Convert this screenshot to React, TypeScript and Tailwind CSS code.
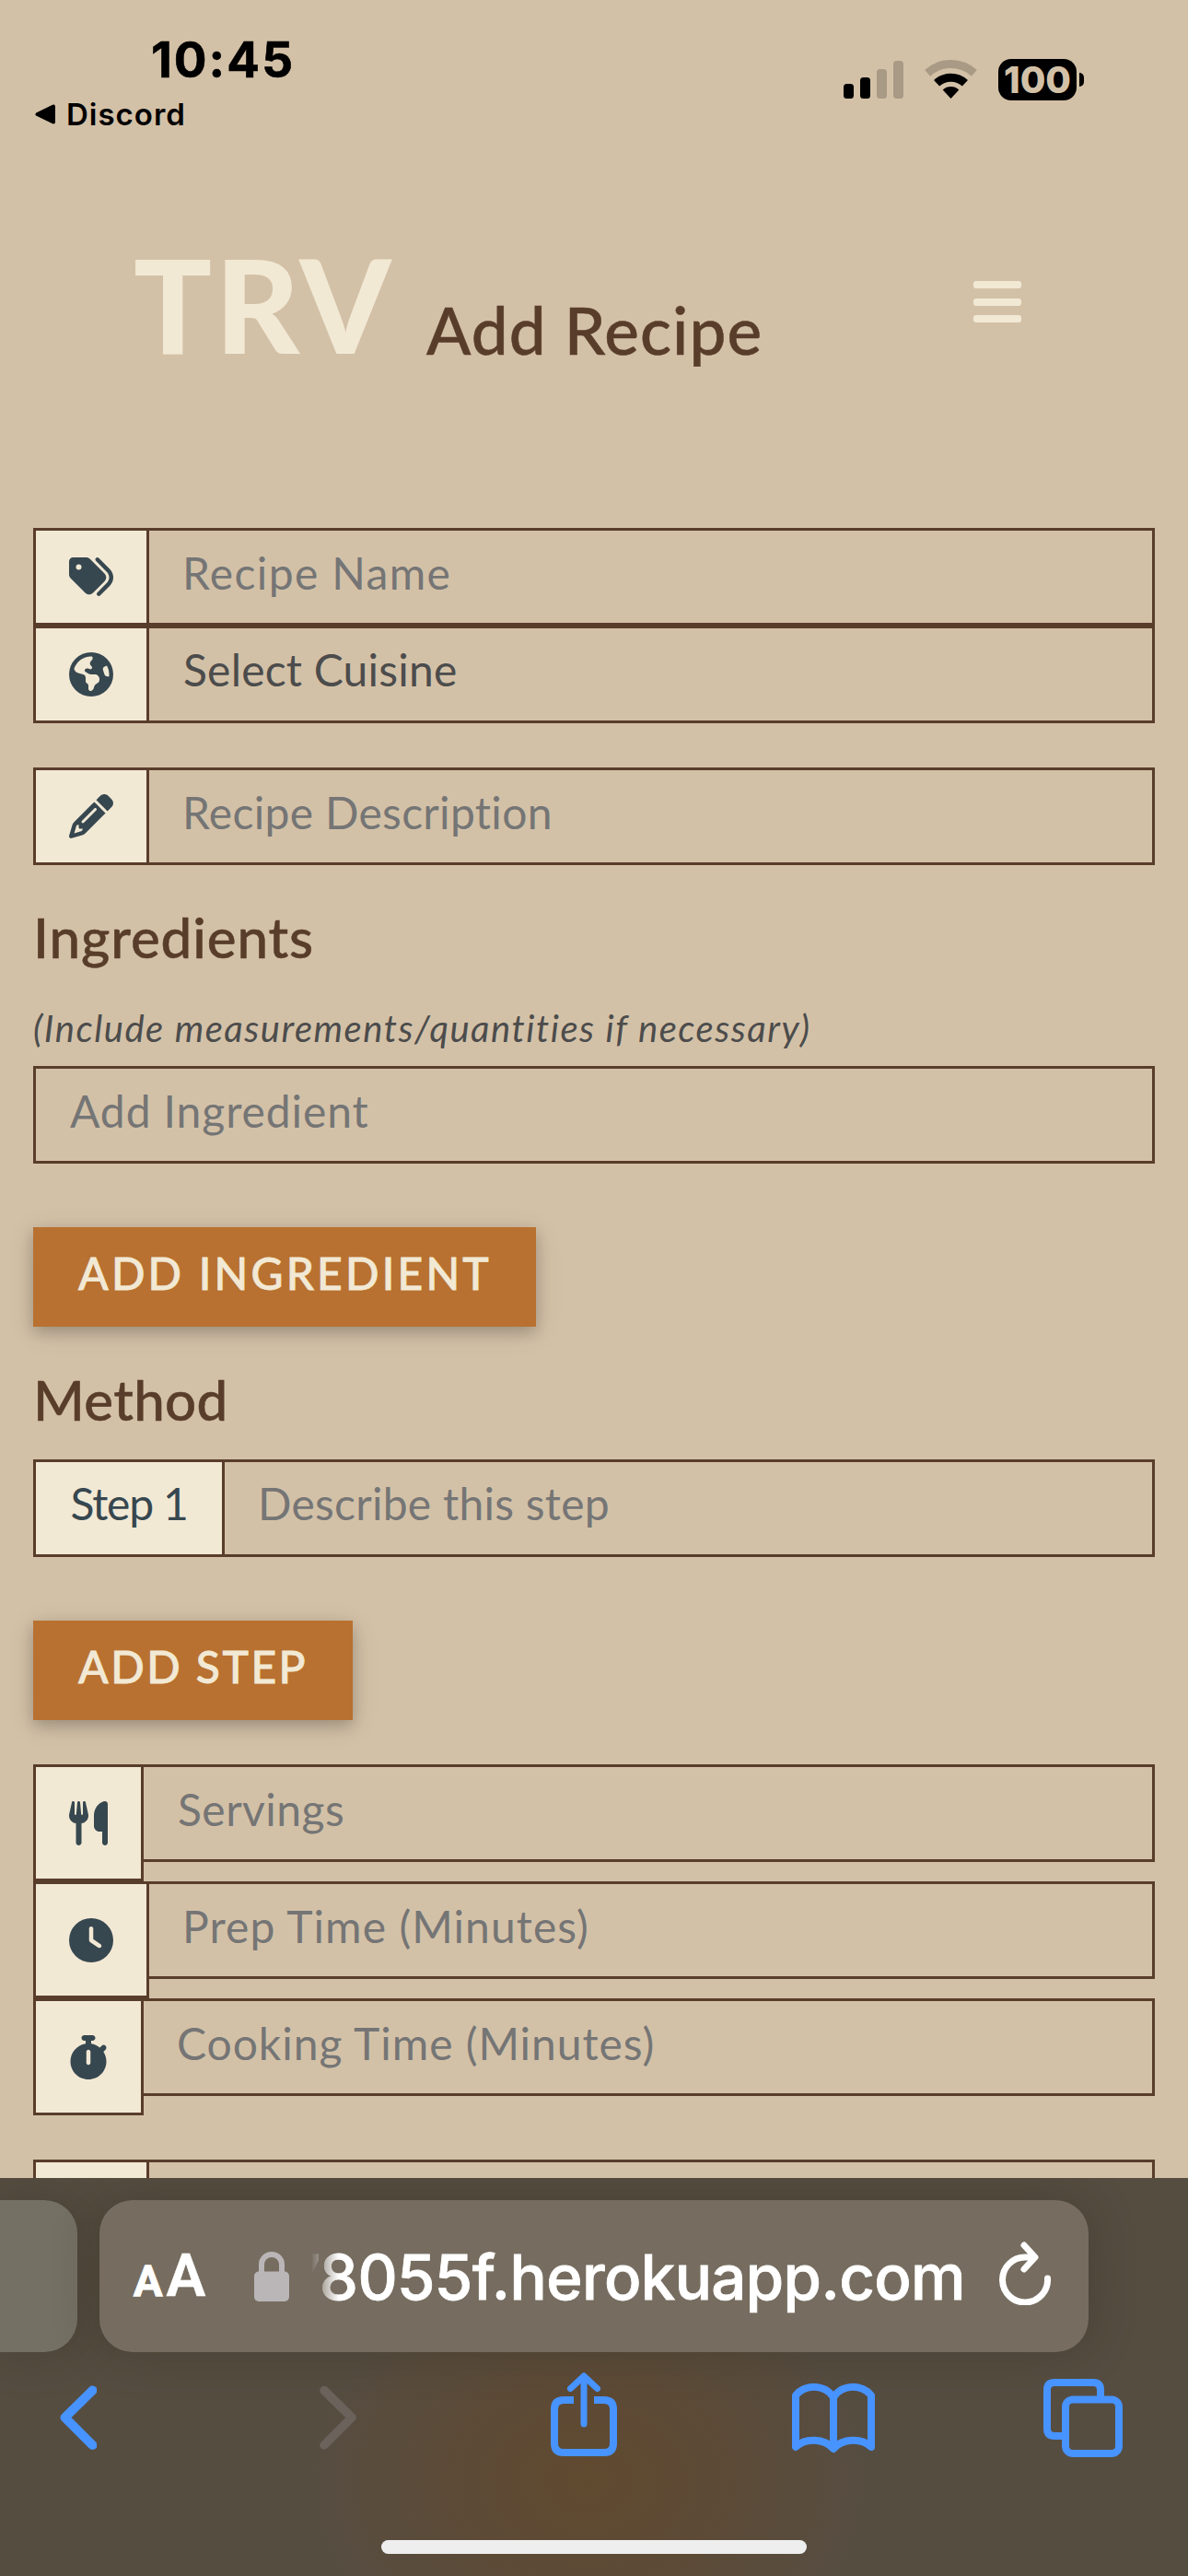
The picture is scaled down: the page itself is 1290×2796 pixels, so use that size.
import type { ReactNode } from 'react';
import { FaTags, FaEarthAmericas, FaPencil, FaUtensils, FaClock, FaStopwatch } from 'react-icons/fa6';

function StatusBar() {
  return (
    <div className="flex h-[260px] shrink-0 items-start justify-between font-['Inter',sans-serif] text-black">
      <div className="flex flex-col gap-[6px] pt-[33px]">
        <div className="pl-[164px] text-[53px] leading-[64px] font-bold tracking-[2px] [-webkit-text-stroke:0.6px]">10:45</div>
        <div className="flex items-center gap-[12px] pl-[38px] text-[33px] leading-[42px] font-semibold tracking-[1px]">
          <svg width="22" height="22" viewBox="0 0 22 22" stroke="currentColor" strokeWidth="4" strokeLinejoin="round" fill="currentColor">
            <path d="M2.5 11 L20 2.5 V19.5Z" />
          </svg>
          Discord
        </div>
      </div>
      <div className="flex gap-[23px] pt-[64px] pr-[113px]">
        <svg width="65" height="45" viewBox="0 0 65 45">
          <rect x="0" y="27" width="11" height="16" rx="3.5" />
          <rect x="18" y="20" width="11" height="23" rx="3.5" />
          <rect x="36" y="11" width="11" height="32" rx="3.5" opacity="0.2" />
          <rect x="54" y="2" width="11" height="41" rx="3.5" opacity="0.2" />
        </svg>
        <svg width="57" height="45" viewBox="0 -1 57 45" fill="none" stroke="#000" strokeWidth="9">
          <path d="M3.2 14.35 A37.5 37.5 0 0 1 53.8 14.35" opacity="0.2" />
          <path d="M13.1 25.2 A22.75 22.75 0 0 1 43.9 25.2" />
          <path d="M28.5 42 L19.7 32.4 A13 13 0 0 1 37.3 32.4Z" fill="#000" stroke="none" />
        </svg>
        <div className="flex items-center gap-[3px]">
          <div className="flex h-[45px] w-[85px] items-center justify-center rounded-[14px] bg-black text-[40px] leading-[45px] font-extrabold text-[#d3c1a7]">
            100
          </div>
          <div className="h-[15px] w-[5px] rounded-r-full bg-black" />
        </div>
      </div>
    </div>
  );
}

function SiteHeader() {
  return (
    <header className="flex h-[313px] shrink-0 items-start pl-[145px] font-['Lato',sans-serif]">
      <div className="mt-[2px] w-[318px] text-[141px] leading-[136px] font-black tracking-[3.6px] text-[#f2e9d5]">TRV</div>
      <h1 className="mt-[53px] w-[594px] text-[71px] leading-[90px] font-medium tracking-[1.1px] text-[#593d2b] [-webkit-text-stroke:0.5px]">Add Recipe</h1>
      <div className="mt-[45px] flex w-[52px] flex-col gap-[10.5px]">
        <span className="h-[8px] rounded-[3px] bg-[#f2e9d5]" />
        <span className="h-[8px] rounded-[3px] bg-[#f2e9d5]" />
        <span className="h-[8px] rounded-[3px] bg-[#f2e9d5]" />
      </div>
    </header>
  );
}

function Field({ addon, wide = '', tall = false, children }: { addon: ReactNode; wide?: string; tall?: boolean; children: ReactNode }) {
  return (
    <div className={tall ? 'flex h-[127px] items-start' : 'flex h-[106px] items-stretch'}>
      <div className={`flex shrink-0 items-center justify-center border-[3px] border-[#593d2b] bg-[#f2e9d5] text-[48px] text-[#37474f] ${tall ? 'h-[127px]' : ''} ${wide || 'w-[126px]'}`}>
        {addon}
      </div>
      <div className="flex h-[106px] flex-1 items-center border-y-[3px] border-r-[3px] border-[#593d2b] pb-[9px] pl-9">{children}</div>
    </div>
  );
}

function Placeholder({ className, children }: { className: string; children: ReactNode }) {
  return <span className={`text-[48px] leading-[58px] whitespace-nowrap text-[#757575] ${className}`}>{children}</span>;
}

function ActionButton({ className, children }: { className: string; children: ReactNode }) {
  return (
    <button
      className={`flex h-[108px] items-center bg-[#b87130] pb-[9px] pl-[49px] text-[48px] leading-[58px] font-medium whitespace-nowrap text-[#f2e9d5] shadow-[0_6px_15px_rgba(0,0,0,0.2),0_6px_30px_rgba(0,0,0,0.1)] [-webkit-text-stroke:0.8px] ${className}`}
    >
      {children}
    </button>
  );
}

function RecipeForm() {
  return (
    <main className="flex min-h-0 flex-1 flex-col overflow-hidden px-9 font-['Lato',sans-serif]">
      <Field addon={<FaTags />}><Placeholder className="tracking-[1.34px]">Recipe Name</Placeholder></Field>
      <Field addon={<FaEarthAmericas />}>
        <span className="pb-[2px] pl-px text-[48px] leading-[58px] tracking-[0.2px] text-[#4c4c4c]">Select Cuisine</span>
      </Field>
      <div className="mt-12 h-[105px] shrink-0">
        <Field addon={<FaPencil />}><Placeholder className="tracking-[0.3px]">Recipe Description</Placeholder></Field>
      </div>
      <h2 className="mt-[43px] text-[60px] leading-[72px] font-medium tracking-[0.9px] text-[#593d2b] [-webkit-text-stroke:0.5px]">Ingredients</h2>
      <p className="mt-[39px] text-[40px] leading-[48px] tracking-[1.52px] whitespace-nowrap text-[#4c4c4c] italic">
        (Include measurements/quantities if necessary)
      </p>
      <div className="mt-[17px] flex h-[106px] shrink-0 items-center border-[3px] border-[#593d2b] pb-[9px] pl-[37px]">
        <Placeholder className="tracking-[0.9px]">Add Ingredient</Placeholder>
      </div>
      <ActionButton className="mt-[69px] w-[546px] shrink-0 tracking-[3.2px]">ADD INGREDIENT</ActionButton>
      <h2 className="mt-[43px] text-[60px] leading-[72px] font-medium tracking-[0.3px] text-[#593d2b] [-webkit-text-stroke:0.5px]">Method</h2>
      <div className="mt-[29px] shrink-0">
        <Field
          wide="w-[208px]"
          addon={<span className="pb-[11px] leading-[58px] tracking-[-1.2px] whitespace-nowrap">Step 1</span>}
        >
          <Placeholder className="pb-[2px] tracking-[0.25px]">Describe this step</Placeholder>
        </Field>
      </div>
      <ActionButton className="mt-[69px] w-[347px] shrink-0 tracking-[2.5px]">ADD STEP</ActionButton>
      <div className="mt-12 shrink-0">
        <Field tall wide="w-[120px]" addon={<FaUtensils />}><Placeholder className="pl-px tracking-[0.47px]">Servings</Placeholder></Field>
        <Field tall addon={<FaClock />}><Placeholder className="tracking-[1.06px]">Prep Time (Minutes)</Placeholder></Field>
        <Field tall wide="w-[120px]" addon={<FaStopwatch />}><Placeholder className="tracking-[0.95px]">Cooking Time (Minutes)</Placeholder></Field>
      </div>
      <div className="mt-12 shrink-0">
        <Field addon={null}>{null}</Field>
      </div>
    </main>
  );
}

function BrowserBar() {
  return (
    <footer className="flex h-[432px] shrink-0 flex-col overflow-hidden bg-[#564d41] bg-[radial-gradient(ellipse_300px_230px_at_640px_330px,#604a2f_0%,#5d4a36_45%,transparent_100%)] pt-[24px] font-['Inter',sans-serif]">
      <div className="flex h-[165px] shrink-0 gap-[24px]">
        <div className="w-[84px] rounded-r-[36px] bg-[#747064] shadow-[0_0_50px_rgba(40,35,20,0.3)]" />
        <div className="flex w-[1074px] items-center rounded-[36px] bg-[#766d60] pl-[37px] text-white shadow-[0_0_50px_rgba(40,35,20,0.3)]">
          <div className="flex w-[131px] items-baseline gap-[4px] pt-[6px] font-['Roboto',sans-serif] leading-[80px] font-semibold">
            <span className="text-[47px] [-webkit-text-stroke:1.4px]">A</span>
            <span className="text-[64px] [-webkit-text-stroke:0.6px]">A</span>
          </div>
          <svg width="38" height="54" viewBox="0 0 38 54" className="shrink-0 text-[#bab6b8]">
            <rect y="21.5" width="38" height="32.5" rx="5" fill="currentColor" />
            <path d="M8 24 V14 A11 11 0 0 1 30 14 V24" fill="none" stroke="currentColor" strokeWidth="6" />
          </svg>
          <div className="ml-[24px] flex w-[710px] shrink-0 justify-end overflow-hidden pt-[2px] text-[67px] leading-[84px] font-medium tracking-[-0.6px] [-webkit-text-stroke:0.8px] [mask-image:linear-gradient(to_right,transparent,black_30px)]">
            <span>78055f.herokuapp.com</span>
          </div>
          <svg width="57" height="70" viewBox="0 0 57 70" className="mb-[7px] ml-[37px] shrink-0" fill="none" stroke="currentColor" strokeWidth="7" strokeLinecap="round" strokeLinejoin="round">
            <path d="M52.5 41 A24.5 24.5 0 1 1 28 18 H37" />
            <path d="M27 5 L39 18 L27 31" />
          </svg>
        </div>
      </div>
      <nav className="mt-[20px] flex h-[96px] shrink-0 text-[#4793ff]">
        <svg width="41" height="96" viewBox="0 0 41 96" className="ml-[64px]" fill="none" stroke="currentColor" strokeWidth="10" strokeLinecap="round" strokeLinejoin="round">
          <path d="M36.5 21.5 L6.5 51 L36.5 81" />
        </svg>
        <svg width="41" height="96" viewBox="0 0 41 96" className="ml-[242px] text-[#6b635b]" fill="none" stroke="currentColor" strokeWidth="9.5" strokeLinecap="round" strokeLinejoin="round">
          <path d="M5 21.5 L35 51 L5 81" />
        </svg>
        <svg width="72" height="96" viewBox="0 0 72 96" className="ml-[210px]" fill="none" stroke="currentColor" strokeWidth="8">
          <path d="M25 32 H14 Q4 32 4 42 V79 Q4 89 14 89 H58 Q68 89 68 79 V42 Q68 32 58 32 H47" />
          <path d="M36 6 V58 M21.5 19.5 L36 6 L50.5 19.5" strokeWidth="7" strokeLinecap="round" strokeLinejoin="round" />
        </svg>
        <svg width="90" height="96" viewBox="0 0 90 96" className="ml-[190px]" fill="none" stroke="currentColor" strokeWidth="8" strokeLinejoin="round">
          <path d="M4 83 V27 C14 15 35 14 45 29 C55 14 76 15 86 27 V83 C76 73 55 73 45 85 C35 73 14 73 4 83Z M45 29 V85" />
        </svg>
        <svg width="86" height="96" viewBox="0 0 86 96" className="ml-[183px]" fill="none" stroke="currentColor" strokeWidth="8">
          <rect x="24" y="31.5" width="58" height="58.5" rx="8" />
          <path d="M62 28 V21 Q62 13 54 13 H12 Q4 13 4 21 V63 Q4 71 12 71 H21" />
        </svg>
      </nav>
      <div className="mt-[88px] h-[15px] w-[462px] shrink-0 self-center rounded-full bg-[#eeeeee]" />
    </footer>
  );
}

export default function App() {
  return (
    <div className="flex h-[2796px] w-[1290px] flex-col overflow-hidden bg-[#d3c1a7]">
      <StatusBar />
      <SiteHeader />
      <RecipeForm />
      <BrowserBar />
    </div>
  );
}
